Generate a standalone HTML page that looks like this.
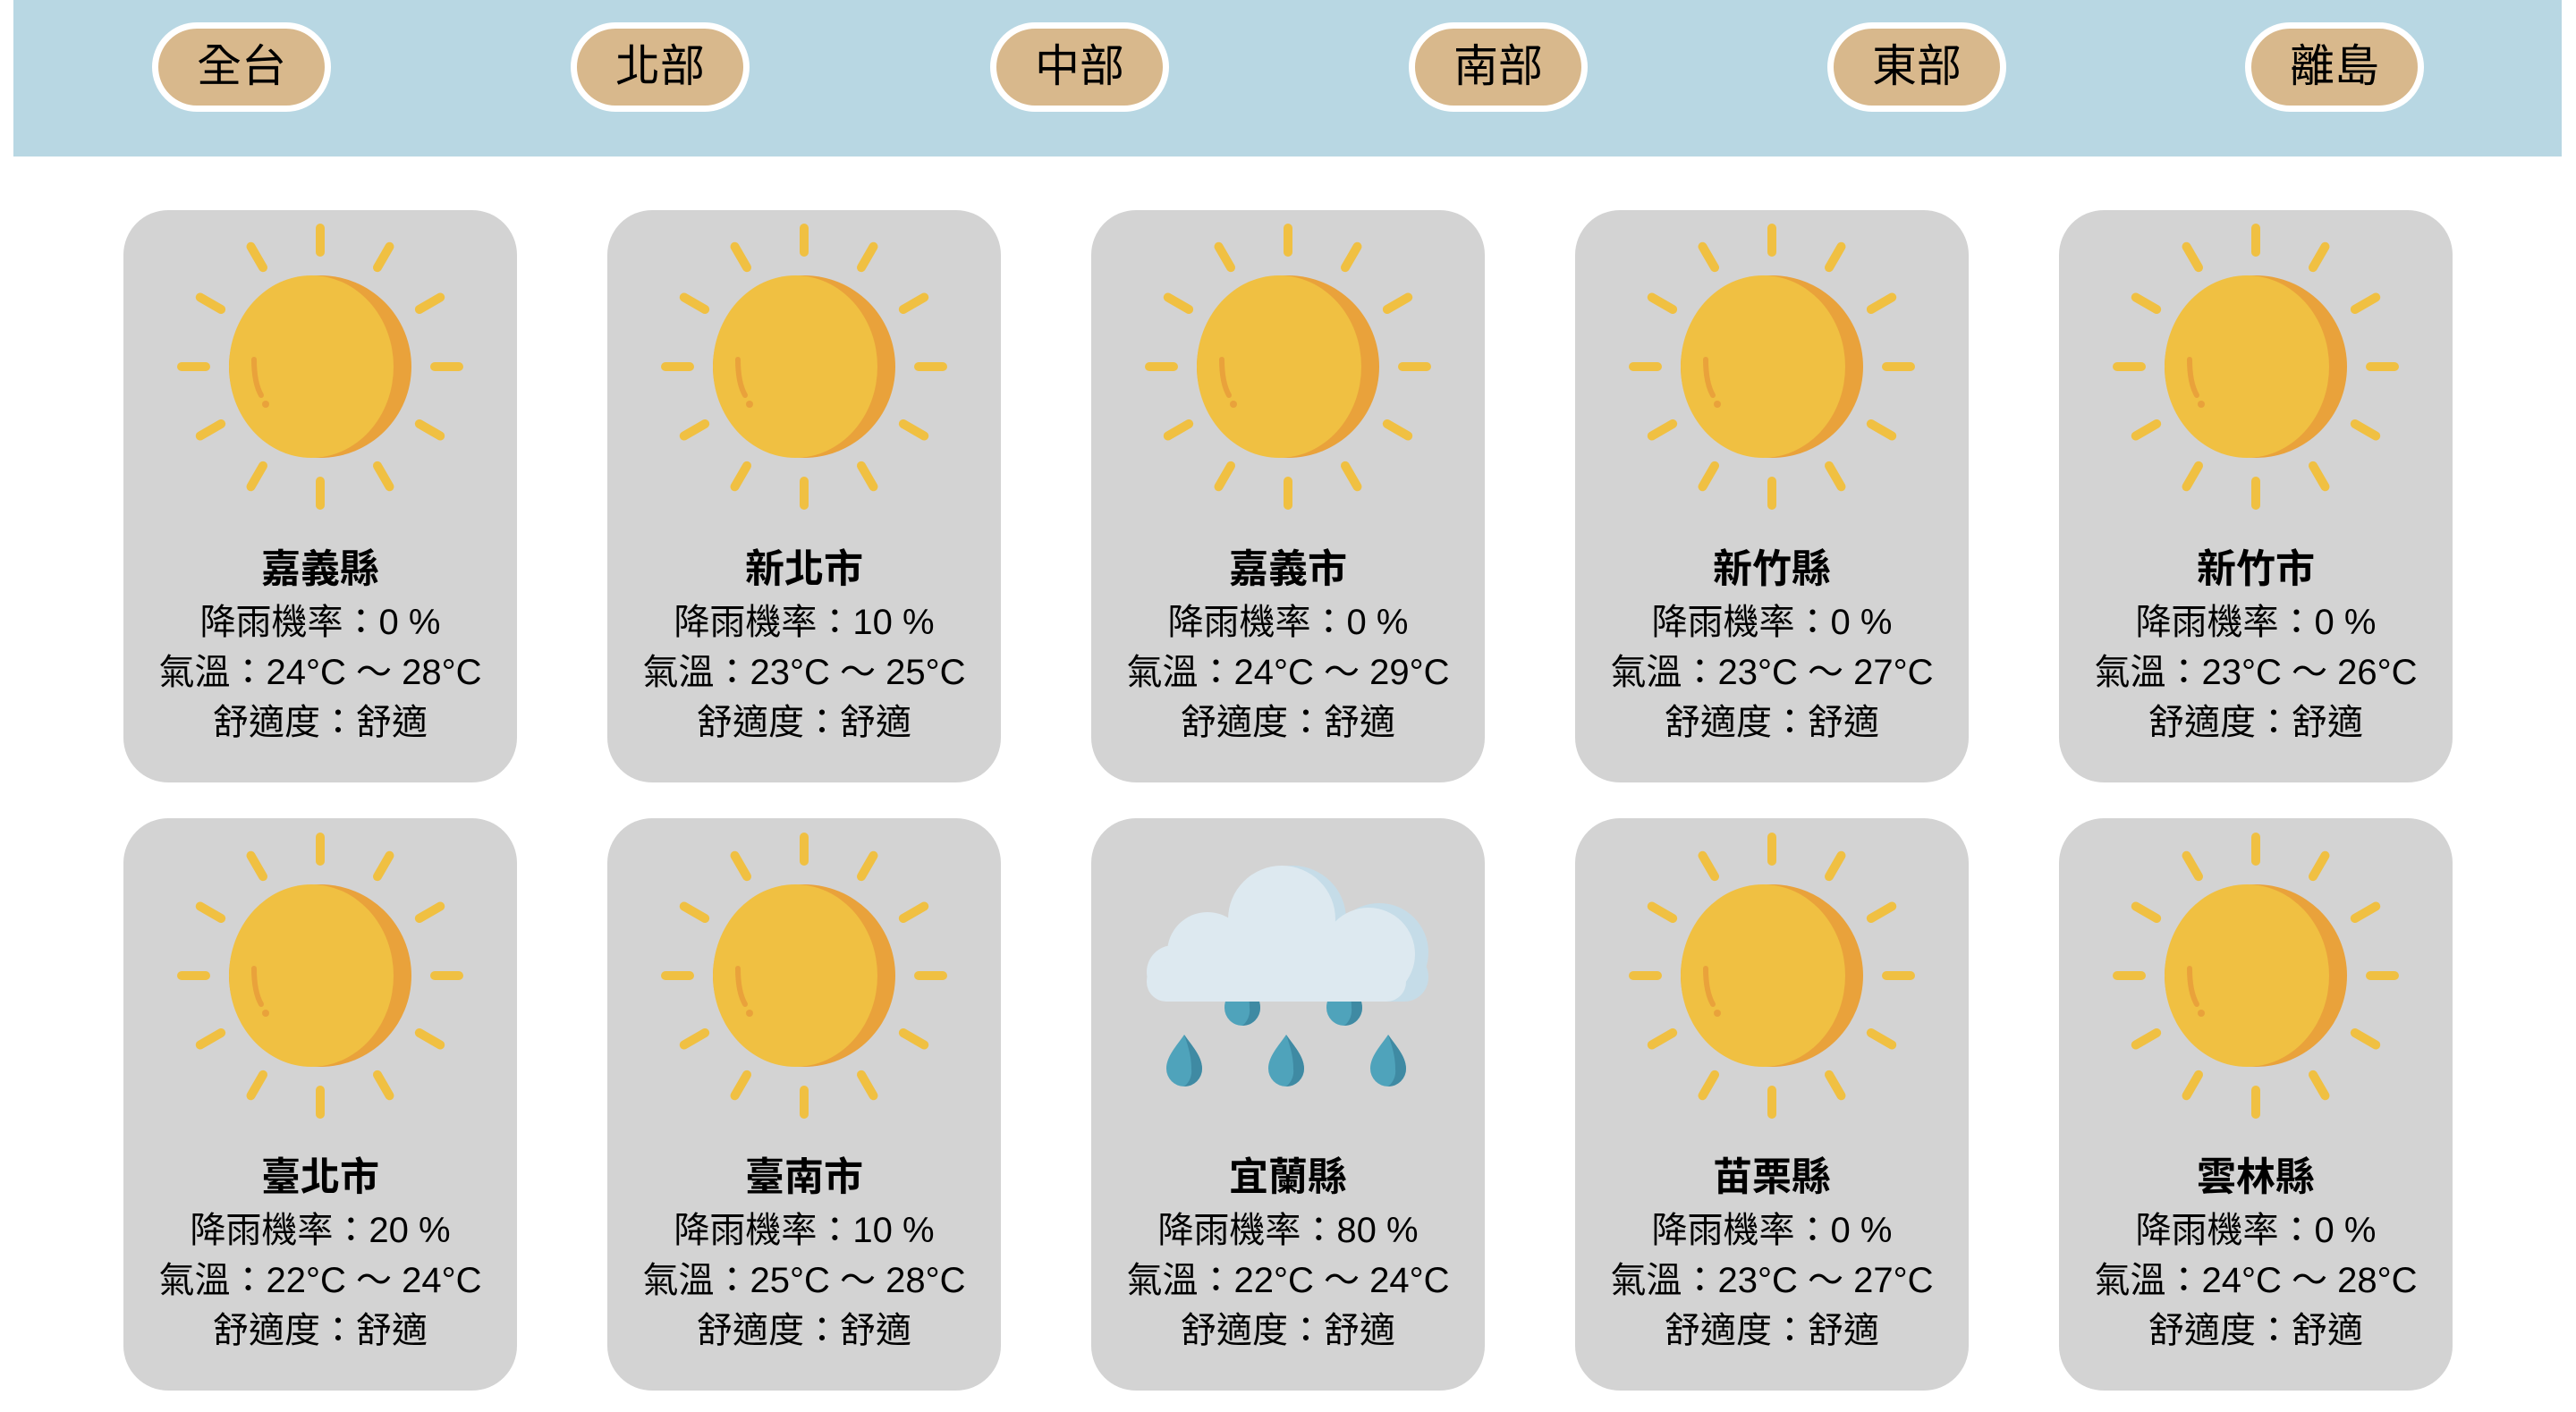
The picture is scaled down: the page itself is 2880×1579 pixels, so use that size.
<!DOCTYPE html>
<html><head><meta charset="utf-8">
<style>
*{margin:0;padding:0;box-sizing:border-box}
body{width:2880px;height:1579px;background:#fff;position:relative;overflow:hidden;font-family:"Liberation Sans","Noto Sans CJK TC",sans-serif;color:#000}
.hdr{position:absolute;left:15px;top:0;width:2849px;height:175px;background:#b8d7e3}
.btn{position:absolute;top:25px;width:200px;height:100px;border:7px solid #fff;border-radius:50px;background:#d8b88c;font-size:50px;text-align:center;line-height:84px}
.card{position:absolute;width:440px;height:640px;background:#d3d3d3;border-radius:50px}
.card svg{position:absolute;left:0;top:0}
.t{position:absolute;left:0;width:440px;text-align:center;white-space:nowrap}
.n{font-weight:bold;font-size:44px;top:365px}
.l1{font-size:40px;top:428px}
.l2{font-size:40px;top:484px}
.l3{font-size:40px;top:540px}
</style></head><body>
<svg width="0" height="0" style="position:absolute">
<defs>
<g id="sun">
<g stroke="#f0c042" stroke-width="10" stroke-linecap="round">
<line x1="0" y1="-128" x2="0" y2="-155"/>
<line x1="0" y1="-128" x2="0" y2="-155" transform="rotate(30)"/>
<line x1="0" y1="-128" x2="0" y2="-155" transform="rotate(60)"/>
<line x1="0" y1="-128" x2="0" y2="-155" transform="rotate(90)"/>
<line x1="0" y1="-128" x2="0" y2="-155" transform="rotate(120)"/>
<line x1="0" y1="-128" x2="0" y2="-155" transform="rotate(150)"/>
<line x1="0" y1="-128" x2="0" y2="-155" transform="rotate(180)"/>
<line x1="0" y1="-128" x2="0" y2="-155" transform="rotate(210)"/>
<line x1="0" y1="-128" x2="0" y2="-155" transform="rotate(240)"/>
<line x1="0" y1="-128" x2="0" y2="-155" transform="rotate(270)"/>
<line x1="0" y1="-128" x2="0" y2="-155" transform="rotate(300)"/>
<line x1="0" y1="-128" x2="0" y2="-155" transform="rotate(330)"/>
</g>
<circle r="102" fill="#e9a23b"/>
<ellipse cx="-10" rx="92" ry="102" fill="#f0c042"/>
<path d="M-74 -8 Q-74 18 -66 32" stroke="#e9a23b" stroke-width="6" fill="none" stroke-linecap="round"/>
<circle cx="-61" cy="42" r="4" fill="#e9a23b"/>
</g>
<g id="drop"><path d="M0 -30 C8 -18 20 -6 20 8 A20 20 0 0 1 -20 8 C-20 -6 -8 -18 0 -30Z" fill="#4fa3bb"/><path d="M0 -30 C8 -18 20 -6 20 8 A20 20 0 0 1 0 28 A22 22 0 0 0 8 8 C8 -6 4 -18 0 -30Z" fill="#3f8aa3"/></g>
</defs></svg>

<div class="hdr"></div>
<div class="btn" style="left:170px">全台</div>
<div class="btn" style="left:638px">北部</div>
<div class="btn" style="left:1107px">中部</div>
<div class="btn" style="left:1575px">南部</div>
<div class="btn" style="left:2043px">東部</div>
<div class="btn" style="left:2510px">離島</div>

<div class="card" style="left:138px;top:235px"><svg width="440" height="360"><use href="#sun" x="220" y="175"/></svg><div class="t n">嘉義縣</div><div class="t l1">降雨機率：0 %</div><div class="t l2">氣溫：24°C ～ 28°C</div><div class="t l3">舒適度：舒適</div></div>
<div class="card" style="left:679px;top:235px"><svg width="440" height="360"><use href="#sun" x="220" y="175"/></svg><div class="t n">新北市</div><div class="t l1">降雨機率：10 %</div><div class="t l2">氣溫：23°C ～ 25°C</div><div class="t l3">舒適度：舒適</div></div>
<div class="card" style="left:1220px;top:235px"><svg width="440" height="360"><use href="#sun" x="220" y="175"/></svg><div class="t n">嘉義市</div><div class="t l1">降雨機率：0 %</div><div class="t l2">氣溫：24°C ～ 29°C</div><div class="t l3">舒適度：舒適</div></div>
<div class="card" style="left:1761px;top:235px"><svg width="440" height="360"><use href="#sun" x="220" y="175"/></svg><div class="t n">新竹縣</div><div class="t l1">降雨機率：0 %</div><div class="t l2">氣溫：23°C ～ 27°C</div><div class="t l3">舒適度：舒適</div></div>
<div class="card" style="left:2302px;top:235px"><svg width="440" height="360"><use href="#sun" x="220" y="175"/></svg><div class="t n">新竹市</div><div class="t l1">降雨機率：0 %</div><div class="t l2">氣溫：23°C ～ 26°C</div><div class="t l3">舒適度：舒適</div></div>

<div class="card" style="left:138px;top:915px"><svg width="440" height="360"><use href="#sun" x="220" y="176"/></svg><div class="t n">臺北市</div><div class="t l1">降雨機率：20 %</div><div class="t l2">氣溫：22°C ～ 24°C</div><div class="t l3">舒適度：舒適</div></div>
<div class="card" style="left:679px;top:915px"><svg width="440" height="360"><use href="#sun" x="220" y="176"/></svg><div class="t n">臺南市</div><div class="t l1">降雨機率：10 %</div><div class="t l2">氣溫：25°C ～ 28°C</div><div class="t l3">舒適度：舒適</div></div>
<div class="card" style="left:1220px;top:915px"><svg width="440" height="360">
<use href="#drop" x="169" y="204"/><use href="#drop" x="283" y="204"/>
<g fill="#c5dce8"><circle cx="225" cy="113" r="60"/><circle cx="322" cy="150" r="55"/><rect x="200" y="150" width="177" height="55" rx="27"/></g>
<g fill="#dde9f0"><circle cx="213" cy="113" r="60"/><circle cx="310" cy="152" r="52"/><circle cx="130" cy="150" r="45"/><circle cx="92" cy="172" r="30"/><rect x="62" y="160" width="290" height="45" rx="22"/><rect x="100" y="140" width="220" height="65"/></g>
<use href="#drop" x="104" y="272"/><use href="#drop" x="218" y="272"/><use href="#drop" x="332" y="272"/>
</svg><div class="t n">宜蘭縣</div><div class="t l1">降雨機率：80 %</div><div class="t l2">氣溫：22°C ～ 24°C</div><div class="t l3">舒適度：舒適</div></div>
<div class="card" style="left:1761px;top:915px"><svg width="440" height="360"><use href="#sun" x="220" y="176"/></svg><div class="t n">苗栗縣</div><div class="t l1">降雨機率：0 %</div><div class="t l2">氣溫：23°C ～ 27°C</div><div class="t l3">舒適度：舒適</div></div>
<div class="card" style="left:2302px;top:915px"><svg width="440" height="360"><use href="#sun" x="220" y="176"/></svg><div class="t n">雲林縣</div><div class="t l1">降雨機率：0 %</div><div class="t l2">氣溫：24°C ～ 28°C</div><div class="t l3">舒適度：舒適</div></div>
</body></html>
